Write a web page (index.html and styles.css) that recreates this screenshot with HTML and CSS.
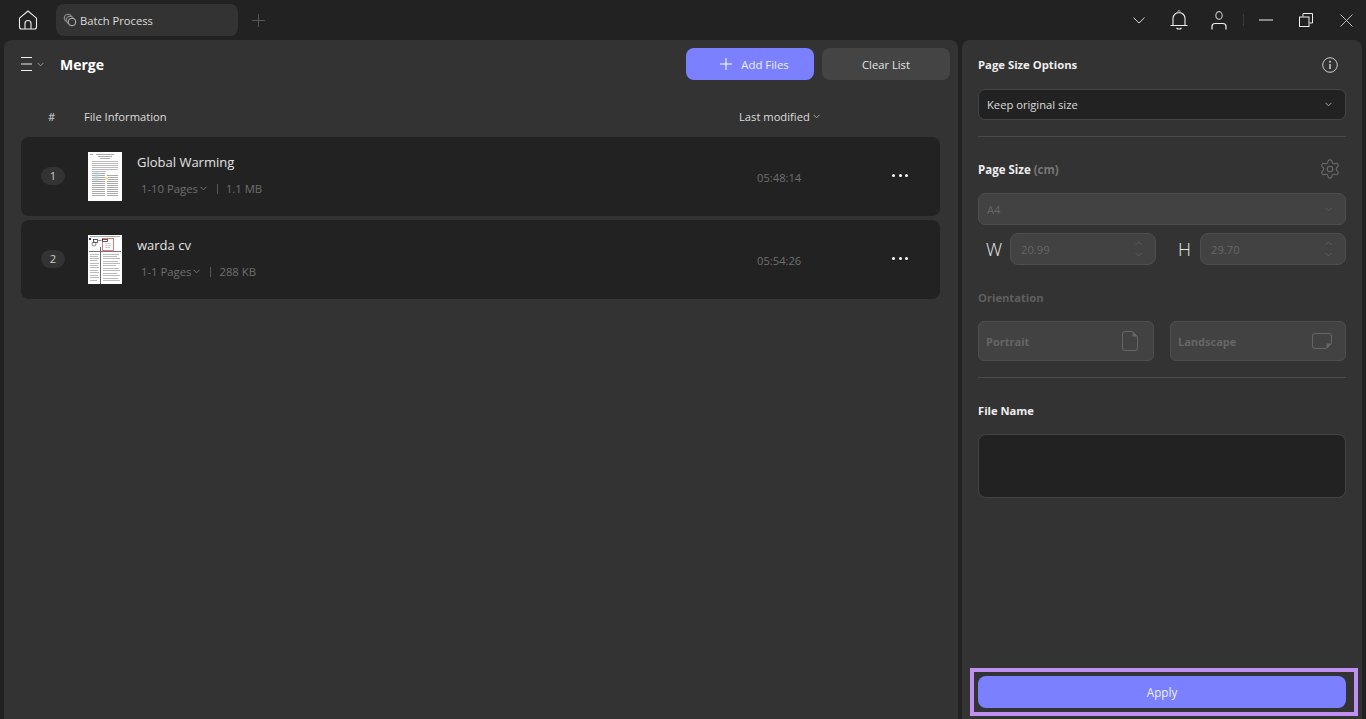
FILE: index.html
```html
<!DOCTYPE html>
<html lang="en">
<head>
<meta charset="utf-8">
<title>Batch Process</title>
<link rel="stylesheet" href="styles.css">
</head>
<body>
<header class="topbar">
  <svg class="home" width="20" height="20" viewBox="0 0 20 20"><path d="M1.500 8.200 10 1l8.500 7.200V17a2 2 0 0 1-2 2h-13a2 2 0 0 1-2-2zM7 19v-5.500a3 3 0 0 1 6 0V19" fill="none" stroke="#eee" stroke-width="1.100"/></svg>
  <div class="tab">
    <svg width="14" height="14" viewBox="0 0 14 14"><circle cx="5" cy="5" r="3.800" fill="none" stroke="#999" stroke-width="1"/><circle cx="7" cy="7" r="3.800" fill="#333" stroke="#999" stroke-width="1"/><circle cx="9" cy="9" r="3.800" fill="#333" stroke="#bbb" stroke-width="1"/></svg>
    <span>Batch Process</span>
  </div>
  <svg class="newtab" width="13" height="13" viewBox="0 0 13 13"><path d="M6.500 0v13M0 6.500h13" stroke="#555" stroke-width="1"/></svg>
  <div class="winctl">
    <div class="cell"><svg width="12" height="7" viewBox="0 0 12 7"><path d="M.5.700 6 6 11.500.700" fill="none" stroke="#ddd"/></svg></div>
    <div class="cell"><svg width="18" height="20" viewBox="0 0 18 20"><path d="M3 15V8.500a6 6 0 0 1 12 0V15M.5 15.500h17M6.500 18a3.500 3.500 0 0 0 5 0" fill="none" stroke="#eee" stroke-width="1.100"/><circle cx="9" cy="1.800" r="1.200" fill="none" stroke="#aaa"/></svg></div>
    <div class="cell"><svg width="16" height="19" viewBox="0 0 16 19"><ellipse cx="8" cy="4.500" rx="3.200" ry="3.800" fill="none" stroke="#bbb" stroke-width="1.200"/><path d="M1 18.500V15.500a3 3 0 0 1 3-3h8a3 3 0 0 1 3 3v3" fill="none" stroke="#eee" stroke-width="1.200"/></svg></div>
    <i class="sep"></i>
    <div class="cell"><svg width="14" height="2" viewBox="0 0 14 2"><path d="M0 1h14" stroke="#eee" stroke-width="1"/></svg></div>
    <div class="cell"><svg width="14" height="14" viewBox="0 0 14 14"><path d="M4 3.500V.5h9.500V10H10.500" fill="none" stroke="#eee"/><rect x=".5" y="4" width="9.500" height="9.500" fill="none" stroke="#eee"/></svg></div>
    <div class="cell"><svg width="13" height="13" viewBox="0 0 13 13"><path d="M.5.500l12 12M12.500.500l-12 12" stroke="#bbb" stroke-width="1"/></svg></div>
  </div>
</header>

<main class="workspace">
  <section class="files">
    <div class="files-head">
      <svg class="menu" width="11" height="14" viewBox="0 0 11 14"><path d="M0 .5h11M0 7h11M0 13.500h11" stroke="#eee"/></svg>
      <svg class="menu-caret" width="7" height="5" viewBox="0 0 7 5"><path d="M.5.800 3.500 3.800 6.500.800" fill="none" stroke="#999"/></svg>
      <h1>Merge</h1>
      <button class="btn primary"><svg width="12" height="12" viewBox="0 0 12 12"><path d="M6 0v12M0 6h12" stroke="#fff"/></svg>Add Files</button>
      <button class="btn ghost">Clear List</button>
    </div>
    <div class="cols">
      <span class="c-num">#</span>
      <span class="c-info">File Information</span>
      <span class="c-mod">Last modified<svg width="7" height="5" viewBox="0 0 7 5"><path d="M.5.800 3.500 3.800 6.500.800" fill="none" stroke="#aaa"/></svg></span>
    </div>
    <div class="list">
      <article class="card">
        <span class="num">1</span>
        <svg class="thumb" width="34" height="49" viewBox="0 0 34 49">
          <rect width="34" height="49" fill="#fff"/>
          <path d="M2 2.500h3M8 2.500h18M10 4.500h14M12 6.500h10" stroke="#aaa"/>
          <path d="M4 9.500h26M4 11.500h26M4 13.500h26M4 15.500h26M4 17.500h26M4 19.500h14" stroke="#bbb"/>
          <path d="M4 21.500h13M4 23.500h13M4 25.500h13M4 27.500h13M4 29.500h13M4 31.500h13M4 33.500h13M4 35.500h13M4 37.500h13M4 39.500h13M4 41.500h13M4 43.500h13" stroke="#aaa"/>
          <path d="M19 23.500h11M19 25.500h11M19 27.500h11M19 29.500h11M19 31.500h11M19 33.500h11M19 35.500h11M19 37.500h11M19 39.500h11M19 41.500h11M19 43.500h11" stroke="#aaa"/>
          <rect x="6" y="20" width="5" height="9" fill="#a9d6e6" opacity=".45"/>
          <rect x="17" y="25" width="3" height="3" fill="#f2e3a0"/>
        </svg>
        <div class="meta">
          <div class="name">Global Warming</div>
          <div class="sub"><span>1-10 Pages</span><svg width="7" height="5" viewBox="0 0 7 5"><path d="M.5.800 3.500 3.800 6.500.800" fill="none" stroke="#777"/></svg><i></i><span>1.1 MB</span></div>
        </div>
        <time>05:48:14</time>
        <div class="dots"><b></b><b></b><b></b></div>
      </article>
      <article class="card">
        <span class="num">2</span>
        <svg class="thumb" width="34" height="49" viewBox="0 0 34 49">
          <rect width="34" height="49" fill="#fff"/>
          <path d="M2 1.500h30" stroke="#aaa"/>
          <rect x="1" y="3" width="2" height="2" fill="#336"/>
          <rect x="5.500" y="4.500" width="4" height="3" fill="none" stroke="#333" stroke-width=".8"/>
          <path d="M9.500 5.500h4" stroke="#888"/>
          <rect x="14.500" y="3.500" width="11" height="12" fill="#fff" stroke="#e66" stroke-width=".9"/>
          <rect x="14.500" y="4.500" width="5" height="2" fill="none" stroke="#333" stroke-width=".8"/>
          <circle cx="6" cy="9" r="2" fill="none" stroke="#555" stroke-width=".7"/>
          <path d="M17 8.500h6M17 10.500h6M17 12.500h5" stroke="#ccc"/>
          <path d="M1 16.500h32" stroke="#777"/>
          <path d="M12.500 12v37" stroke="#666" stroke-width="1"/>
          <path d="M2 19.500h9M2 21.500h8M2 23.500h9M2 25.500h7M2 28.500h9M2 30.500h8M2 32.500h9M2 35.500h8M2 37.500h9M2 40.500h8M2 42.500h9M2 45.500h7" stroke="#bbb"/>
          <path d="M15 19.500h16M15 21.500h14M15 23.500h17M15 26.500h15M15 28.500h17M15 30.500h13M15 33.500h16M15 35.500h17M15 38.500h14M15 40.500h17M15 43.500h15M15 45.500h17" stroke="#bbb"/>
        </svg>
        <div class="meta">
          <div class="name">warda cv</div>
          <div class="sub"><span>1-1 Pages</span><svg width="7" height="5" viewBox="0 0 7 5"><path d="M.5.800 3.500 3.800 6.500.800" fill="none" stroke="#777"/></svg><i></i><span>288 KB</span></div>
        </div>
        <time>05:54:26</time>
        <div class="dots"><b></b><b></b><b></b></div>
      </article>
    </div>
  </section>

  <aside class="options">
    <div class="label-row first">
      <h2 class="h-opt">Page Size Options</h2>
      <svg width="16" height="16" viewBox="0 0 16 16"><circle cx="8" cy="8" r="7.300" fill="none" stroke="#ccc" stroke-width="1"/><path d="M8 7v5" stroke="#ccc" stroke-width="1.500"/><circle cx="8" cy="4.700" r="1" fill="#ccc"/></svg>
    </div>
    <div class="select dark"><span>Keep original size</span><svg width="7" height="5" viewBox="0 0 7 5"><path d="M.5.800 3.500 3.800 6.500.800" fill="none" stroke="#aaa"/></svg></div>
    <hr>
    <div class="label-row size">
      <h2>Page Size <em>(cm)</em></h2>
      <svg width="22" height="22" viewBox="0 0 24 24"><path d="M12.220 2h-.44a2 2 0 0 0-2 2v.18a2 2 0 0 1-1 1.730l-.43.250a2 2 0 0 1-2 0l-.15-.08a2 2 0 0 0-2.730.730l-.22.380a2 2 0 0 0 .730 2.730l.15.100a2 2 0 0 1 1 1.720v.510a2 2 0 0 1-1 1.740l-.15.090a2 2 0 0 0-.730 2.730l.22.380a2 2 0 0 0 2.730.730l.15-.08a2 2 0 0 1 2 0l.43.250a2 2 0 0 1 1 1.730V20a2 2 0 0 0 2 2h.44a2 2 0 0 0 2-2v-.18a2 2 0 0 1 1-1.730l.43-.25a2 2 0 0 1 2 0l.15.080a2 2 0 0 0 2.730-.73l.22-.39a2 2 0 0 0-.73-2.730l-.15-.08a2 2 0 0 1-1-1.740v-.5a2 2 0 0 1 1-1.740l.15-.09a2 2 0 0 0 .73-2.730l-.22-.38a2 2 0 0 0-2.730-.73l-.15.080a2 2 0 0 1-2 0l-.43-.25a2 2 0 0 1-1-1.730V4a2 2 0 0 0-2-2z" fill="none" stroke="#6c6c6c" stroke-width="1.200"/><circle cx="12" cy="12" r="3" fill="none" stroke="#6c6c6c" stroke-width="1.200"/></svg>
    </div>
    <div class="select off"><span>A4</span><svg width="7" height="5" viewBox="0 0 7 5"><path d="M.5.800 3.500 3.800 6.500.800" fill="none" stroke="#5c5c5c"/></svg></div>
    <div class="dims">
      <span class="dim-l">W</span>
      <div class="num-in"><span>20.99</span><svg width="7" height="16" viewBox="0 0 7 16"><path d="M.5 4 3.500 1 6.500 4M.5 12 3.500 15 6.500 12" fill="none" stroke="#5c5c5c"/></svg></div>
      <span class="dim-l h">H</span>
      <div class="num-in"><span>29.70</span><svg width="7" height="16" viewBox="0 0 7 16"><path d="M.5 4 3.500 1 6.500 4M.5 12 3.500 15 6.500 12" fill="none" stroke="#5c5c5c"/></svg></div>
    </div>
    <h2 class="muted">Orientation</h2>
    <div class="orient">
      <div class="o-btn"><span>Portrait</span><svg width="16" height="20" viewBox="0 0 16 20"><path d="M3 .5h7.500L15.500 5.500V17a2.500 2.500 0 0 1-2.500 2.500H3A2.500 2.500 0 0 1 .5 17V3A2.500 2.500 0 0 1 3 .5z" fill="none" stroke="#666"/><path d="M10.500.5 15.500 5.500H10.500z" fill="#666"/></svg></div>
      <div class="o-btn"><span>Landscape</span><svg width="20" height="16" viewBox="0 0 20 16"><path d="M3 .5h14A2.500 2.500 0 0 1 19.500 3V10.500L14.500 15.500H3A2.500 2.500 0 0 1 .5 13V3A2.500 2.500 0 0 1 3 .5z" fill="none" stroke="#666"/><path d="M19.500 10.500 14.500 15.500V10.500z" fill="#666"/></svg></div>
    </div>
    <hr class="second">
    <h2 class="fname">File Name</h2>
    <div class="textbox"></div>
    <div class="apply-wrap"><button class="apply">Apply</button></div>
  </aside>
</main>
</body>
</html>
```
FILE: styles.css
```css
* { box-sizing: border-box; }
html, body { height: 100%; }
body {
  margin: 0;
  height: 719px;
  overflow: hidden;
  display: flex;
  flex-direction: column;
  background: #222;
  color: #eee;
  font-family: "Open Sans", "Noto Sans", sans-serif;
  font-size: 11.2px;
}
svg { display: block; flex: none; }

/* top bar */
.topbar { height: 40px; flex: none; display: flex; align-items: center; padding-left: 18px; }
.tab { width: 182px; height: 32px; margin-left: 18px; padding-left: 7px; background: #333; border-radius: 8px; display: flex; align-items: center; gap: 3px; color: #ddd; }
.newtab { margin-left: 14px; }
.winctl { margin-left: auto; display: flex; align-items: center; height: 40px; }
.cell { width: 40px; height: 40px; display: flex; align-items: center; justify-content: center; }
.sep { width: 1px; height: 12px; background: #3a3a3a; margin: 0 2px 0 4px; }

/* workspace */
.workspace { flex: 1; display: flex; padding: 0 4px; gap: 4px; min-height: 0; }
.files { width: 954px; background: #333; border-radius: 8px 8px 0 0; padding: 8px 8px 0 17px; }
.files-head { height: 32px; display: flex; align-items: center; }
.menu-caret { margin-left: 5px; }
h1 { margin: 1px 0 0 16px; font-size: 14px; font-weight: 700; color: #fff; flex: 1; }
.btn { border: 0; width: 128px; height: 32px; border-radius: 8px; font: inherit; display: flex; align-items: center; justify-content: center; gap: 9px; }
.btn.primary { background: #7a80ff; color: #eef; padding: 0 0 0 9px; font-size: 11.4px; }
.btn.ghost { background: #444; color: #e4e4e4; margin-left: 8px; padding: 0; }

.cols { height: 57px; padding-top: 16px; display: flex; align-items: center; color: #ddd; }
.c-num { width: 63px; padding-left: 27px; }
.c-info { flex: 1; }
.c-mod { width: 211px; display: flex; align-items: center; gap: 3px; }

.list { display: flex; flex-direction: column; gap: 4px; margin-right: 10px; }
.card { height: 79px; background: #222; border-radius: 8px; display: flex; align-items: center; padding-left: 20px; }
.num { width: 24px; height: 18px; margin-top: -1px; border-radius: 9px; background: #333; color: #ccc; text-align: center; line-height: 18px; }
.thumb { margin-left: 23px; }
.meta { margin-left: 15px; width: 620px; }
.name { font-size: 13px; color: #e2e2e2; line-height: 18px; margin-top: -4px; }
.sub { display: flex; align-items: center; margin: 10px 0 0 4px; color: #6f6f6f; line-height: 16px; font-size: 11.3px; }
.sub svg { margin-left: 2px; }
.sub i { width: 1px; height: 10px; background: #555; margin: 0 8px 0 10px; }
time { color: #6f6f6f; width: 134px; margin-top: 1px; }
.dots { display: flex; gap: 3.5px; margin-top: -2px; margin-left: 1px; }
.dots b { width: 3px; height: 3px; border-radius: 50%; background: #fff; }

/* options */
.options { width: 400px; background: #333; border-radius: 8px 8px 0 0; padding: 0 16px 3px; display: flex; flex-direction: column; }
h2 { margin: 0; font-size: 11.500px; font-weight: 700; color: #eee; }
h2 em { font-style: normal; color: #777; }
.h-opt { font-size: 11.300px; }
.label-row { display: flex; align-items: center; justify-content: space-between; padding-right: 8px; }
.label-row.first { height: 49px; }
.label-row.size { height: 32px; margin-top: 16px; padding-right: 5px; }
.select { height: 31px; border-radius: 7px; display: flex; align-items: center; justify-content: space-between; padding: 0 13px 0 8px; flex: none; }
.select.dark { background: #222; border: 1px solid #444; color: #ddd; }
.select.off { background: #424242; border: 1px solid #4e4e4e; color: #666; margin-top: 8px; height: 32px; }
hr { border: 0; height: 1px; background: #4a4a4a; margin: 16px 0 0; width: 100%; flex: none; }
.dims { display: flex; align-items: center; height: 32px; margin-top: 8px; flex: none; }
.dim-l { width: 32px; padding-left: 8px; font-size: 18px; font-weight: 300; color: #e8e8e8; }
.dim-l.h { width: 44px; padding-left: 22px; }
.num-in { width: 146px; height: 32px; background: #424242; border: 1px solid #4e4e4e; border-radius: 8px; display: flex; align-items: center; justify-content: space-between; padding: 0 13px 0 10px; color: #666; }
.muted { color: #5f5f5f; margin-top: 25px; line-height: 16px; font-size: 11.200px; }
.orient { display: flex; gap: 16px; margin-top: 15px; flex: none; }
.o-btn { width: 176px; height: 40px; background: #424242; border: 1px solid #4e4e4e; border-radius: 6px; display: flex; align-items: center; justify-content: space-between; padding: 0 15px 0 7px; color: #666; font-weight: 700; font-size: 11px; }
.o-btn:last-child { padding-right: 13px; }
hr.second { margin-top: 16px; }
.fname { margin-top: 25px; line-height: 16px; font-size: 11.200px; }
.textbox { height: 64px; margin-top: 15px; background: #222; border: 1px solid #444; border-radius: 8px; flex: none; }
.apply-wrap { margin: auto -12px 0 -8px; height: 48px; padding: 4px 8px 4px 4px; border: 4px solid #c08ff2; flex: none; }
.apply { display: block; width: 100%; height: 32px; padding: 0; border: 0; border-radius: 8px; background: #7a80ff; color: #eef; font: inherit; font-size: 11.700px; }
```
